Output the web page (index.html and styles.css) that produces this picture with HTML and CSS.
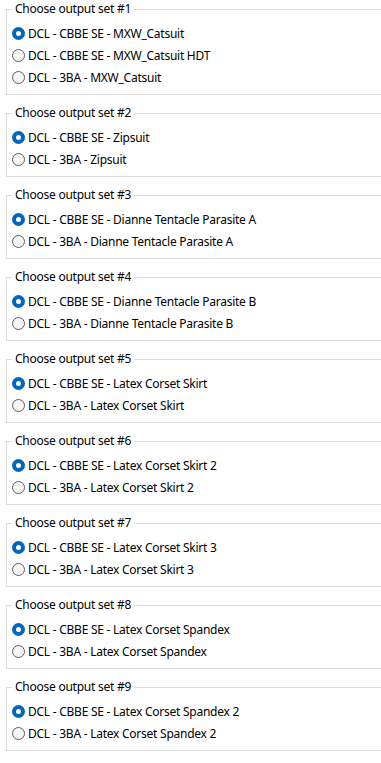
FILE: index.html
```html
<!DOCTYPE html>
<html lang="en">

<head>
    <meta charset="UTF-8">
    <meta name="viewport" content="width=device-width, initial-scale=1.0">
    <title>Output sets</title>
    <link rel="stylesheet" href="styles.css">
</head>

<body>
    <div id="sets">
        <fieldset class="group">
            <legend>Choose output set #1</legend>
            <label class="option"><input type="radio" name="set1" checked> DCL - CBBE SE - MXW_Catsuit</label>
            <label class="option"><input type="radio" name="set1"> DCL - CBBE SE - MXW_Catsuit HDT</label>
            <label class="option"><input type="radio" name="set1"> DCL - 3BA - MXW_Catsuit</label>
        </fieldset>
        <fieldset class="group">
            <legend>Choose output set #2</legend>
            <label class="option"><input type="radio" name="set2" checked> DCL - CBBE SE - Zipsuit</label>
            <label class="option"><input type="radio" name="set2"> DCL - 3BA - Zipsuit</label>
        </fieldset>
        <fieldset class="group">
            <legend>Choose output set #3</legend>
            <label class="option"><input type="radio" name="set3" checked> DCL - CBBE SE - Dianne Tentacle Parasite A</label>
            <label class="option"><input type="radio" name="set3"> DCL - 3BA - Dianne Tentacle Parasite A</label>
        </fieldset>
        <fieldset class="group">
            <legend>Choose output set #4</legend>
            <label class="option"><input type="radio" name="set4" checked> DCL - CBBE SE - Dianne Tentacle Parasite B</label>
            <label class="option"><input type="radio" name="set4"> DCL - 3BA - Dianne Tentacle Parasite B</label>
        </fieldset>
        <fieldset class="group">
            <legend>Choose output set #5</legend>
            <label class="option"><input type="radio" name="set5" checked> DCL - CBBE SE - Latex Corset Skirt</label>
            <label class="option"><input type="radio" name="set5"> DCL - 3BA - Latex Corset Skirt</label>
        </fieldset>
        <fieldset class="group">
            <legend>Choose output set #6</legend>
            <label class="option"><input type="radio" name="set6" checked> DCL - CBBE SE - Latex Corset Skirt 2</label>
            <label class="option"><input type="radio" name="set6"> DCL - 3BA - Latex Corset Skirt 2</label>
        </fieldset>
        <fieldset class="group">
            <legend>Choose output set #7</legend>
            <label class="option"><input type="radio" name="set7" checked> DCL - CBBE SE - Latex Corset Skirt 3</label>
            <label class="option"><input type="radio" name="set7"> DCL - 3BA - Latex Corset Skirt 3</label>
        </fieldset>
        <fieldset class="group">
            <legend>Choose output set #8</legend>
            <label class="option"><input type="radio" name="set8" checked> DCL - CBBE SE - Latex Corset Spandex</label>
            <label class="option"><input type="radio" name="set8"> DCL - 3BA - Latex Corset Spandex</label>
        </fieldset>
        <fieldset class="group">
            <legend>Choose output set #9</legend>
            <label class="option"><input type="radio" name="set9" checked> DCL - CBBE SE - Latex Corset Spandex 2</label>
            <label class="option"><input type="radio" name="set9"> DCL - 3BA - Latex Corset Spandex 2</label>
        </fieldset>
    </div>
</body>

</html>
```

FILE: styles.css
```css
html,
body {
    margin: 0;
    background: #ffffff;
}

body {
    font-family: "Noto Sans", "Open Sans", sans-serif;
    font-size: 12px;
    letter-spacing: -0.25px;
    color: #000000;
}

#sets {
    display: flex;
    flex-direction: column;
    gap: 9px;
}

.group {
    margin: 0 0 0 6px;
    padding: 4px 0 6px 5px;
    border: 1px solid #dcdcdc;
    border-right: none;
    min-width: 0;
    display: flex;
    flex-direction: column;
}

.group legend {
    padding: 0 3px;
    line-height: 18px;
}

.option {
    height: 22px;
    display: flex;
    align-items: center;
    gap: 3px;
    white-space: nowrap;
}

.option input {
    appearance: none;
    -webkit-appearance: none;
    margin: 0;
    width: 13px;
    height: 13px;
    border-radius: 50%;
    border: 1px solid #5c5c5c;
    background: #f6f6f6;
    box-sizing: border-box;
    flex: none;
}

.option input:checked {
    border: 4px solid #0067c0;
    background: #ffffff;
}
```
